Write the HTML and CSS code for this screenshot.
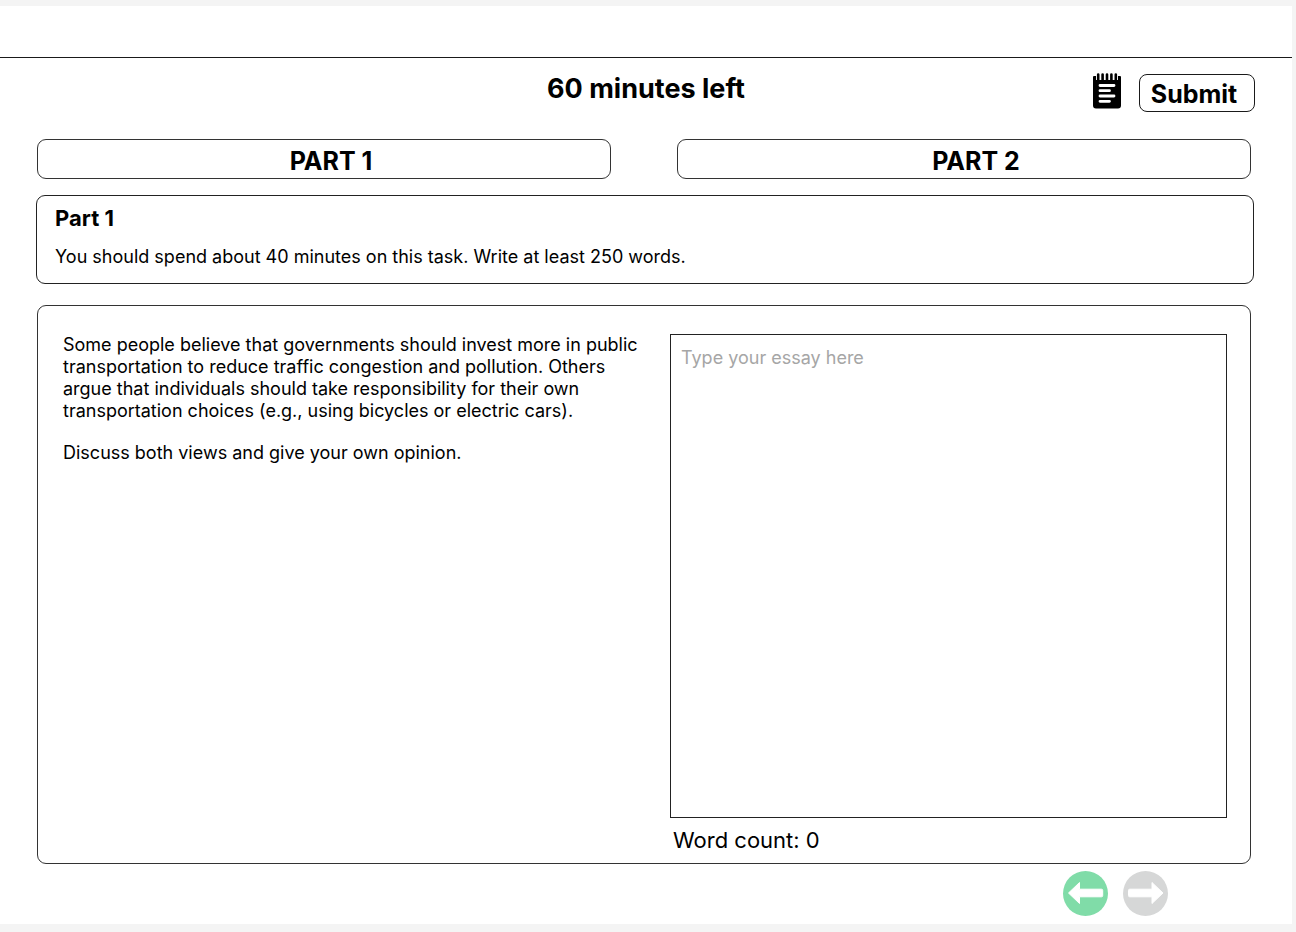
FILE: index.html
```html
<!DOCTYPE html>
<html lang="en">
<head>
<meta charset="utf-8">
<title>Writing test</title>
<link rel="stylesheet" href="styles.css">
</head>
<body>
<div class="sheet">
  <div class="topbar"></div>
  <header class="header">
    <h1 class="timer">60 minutes left</h1>
    <div class="actions">
      <button class="icon-button" type="button" aria-label="Notes">
        <svg class="notes-icon" viewBox="0 0 28 36" aria-hidden="true">
          <path d="M0 4Q0 3 1 3H3V7H25V3H27Q28 3 28 4V32.500Q28 35.500 25 35.500H3Q0 35.500 0 32.500Z"/>
          <path d="M5.200 1.500V7M9.600 1.500V7M14 1.500V7M18.400 1.500V7M22.800 1.500V7" fill="none" stroke="#000" stroke-width="2.600" stroke-linecap="round"/>
          <path d="M7 12.500H21M7 17.700H16.500M7 23H21M7 28.300H16.500" fill="none" stroke="#fff" stroke-width="2.800" stroke-linecap="round"/>
        </svg>
      </button>
      <button class="submit" type="button">Submit</button>
    </div>
  </header>
  <main class="content">
    <nav class="tabs" aria-label="Parts">
      <button class="tab" type="button">PART 1</button>
      <button class="tab tab-second" type="button">PART 2</button>
    </nav>
    <section class="intro">
      <h2 class="intro-title">Part 1</h2>
      <p class="intro-text">You should spend about 40 minutes on this task. Write at least 250 words.</p>
    </section>
    <section class="task">
      <div class="prompt">
        <p>Some people believe that governments should invest more in public transportation to reduce traffic congestion and pollution. Others argue that individuals should take responsibility for their own transportation choices (e.g., using bicycles or electric cars).</p>
        <p>Discuss both views and give your own opinion.</p>
      </div>
      <div class="answer">
        <textarea class="essay" aria-label="Essay" placeholder="Type your essay here"></textarea>
        <p class="count">Word count: 0</p>
      </div>
    </section>
  </main>
  <footer class="pager">
    <button class="page-button" type="button" aria-label="Previous part">
      <svg viewBox="0 0 45 45" aria-hidden="true">
        <circle class="disc-active" cx="22.500" cy="22.500" r="22.500"/>
        <path class="arrow" d="M5.500 22L16.500 11.500V18.200H38.500Q39.700 18.200 39.700 19.400V24.600Q39.700 25.800 38.500 25.800H16.500V32.500Z"/>
      </svg>
    </button>
    <button class="page-button" type="button" aria-label="Next part" disabled>
      <svg viewBox="0 0 45 45" aria-hidden="true">
        <circle class="disc-idle" cx="22.500" cy="22.500" r="22.500"/>
        <path class="arrow" d="M40 22L29 11.500V18.200H6.700Q5.500 18.200 5.500 19.400V24.600Q5.500 25.800 6.700 25.800H29V32.500Z"/>
      </svg>
    </button>
  </footer>
</div>
</body>
</html>
```

FILE: styles.css
```css
* {
  box-sizing: border-box;
}

body {
  margin: 0;
  min-height: 100vh;
  display: flex;
  padding: 6px 4px 8px 0;
  background: #f4f4f4;
  color: #000;
  font-family: Inter, "Liberation Sans", sans-serif;
  font-size: 18px;
  line-height: 22px;
}

h1,
h2,
p {
  margin: 0;
}

button {
  padding: 0;
  border: 0;
  background: none;
  color: inherit;
  font: inherit;
}

.sheet {
  flex: 1;
  display: flex;
  flex-direction: column;
  background: #fff;
}

.topbar {
  height: 52px;
  border-bottom: 1px solid #1a1a1a;
}

.header {
  display: grid;
  grid-template-columns: 1fr auto 1fr;
  align-items: start;
  padding: 14px 37px 0;
}

.timer {
  grid-column: 2;
  font-size: 27px;
  line-height: 34px;
  font-weight: 700;
}

.actions {
  display: flex;
  justify-content: flex-end;
  gap: 18px;
  padding-top: 1px;
}

.icon-button {
  height: 36px;
}

.notes-icon {
  display: block;
  width: 28px;
  height: 36px;
}

.submit {
  width: 116px;
  height: 38px;
  margin-top: 1px;
  padding: 2px 6px 0 0;
  border: 1px solid #1a1a1a;
  border-radius: 8px;
  font-size: 25px;
  font-weight: 700;
}

.content {
  flex: 1;
  display: flex;
  flex-direction: column;
  padding: 27px 38px 7px 36px;
}

.tabs {
  display: grid;
  grid-template-columns: 1fr 1fr;
  gap: 66px;
  padding: 0 3px 0 1px;
}

.tab {
  height: 40px;
  padding: 3px 0 0 14px;
  border: 1px solid #333;
  border-radius: 9px;
  font-size: 25px;
  font-weight: 700;
}

.tab-second {
  padding-left: 24px;
}

.intro {
  margin-top: 16px;
  padding: 8px 18px 15px;
  border: 1px solid #222;
  border-radius: 9px;
}

.intro-title {
  font-size: 22px;
  line-height: 28px;
  font-weight: 700;
}

.intro-text {
  margin-top: 14px;
}

.task {
  flex: 1;
  display: grid;
  grid-template-columns: 583px 1fr;
  gap: 24px;
  margin: 21px 3px 0 1px;
  padding: 28px 23px 9px 25px;
  border: 1px solid #333;
  border-radius: 9px;
}

.prompt p + p {
  margin-top: 20px;
}

.answer {
  display: flex;
  flex-direction: column;
}

.essay {
  flex: 1;
  width: 100%;
  padding: 12px 10px;
  border: 1px solid #222;
  border-radius: 0;
  background: #fff;
  color: inherit;
  font: inherit;
  resize: none;
}

.essay::placeholder {
  color: #a6a6a6;
}

.count {
  margin-top: 8px;
  padding-left: 3px;
  font-size: 22px;
  line-height: 28px;
}

.pager {
  display: flex;
  justify-content: flex-end;
  gap: 15px;
  padding: 0 124px 8px;
}

.page-button svg {
  display: block;
  width: 45px;
  height: 45px;
}

.disc-active {
  fill: #80dca8;
}

.disc-idle {
  fill: #d6d7d7;
}

.arrow {
  fill: #fff;
  stroke: #fff;
  stroke-width: 1px;
  stroke-linejoin: round;
}
```
